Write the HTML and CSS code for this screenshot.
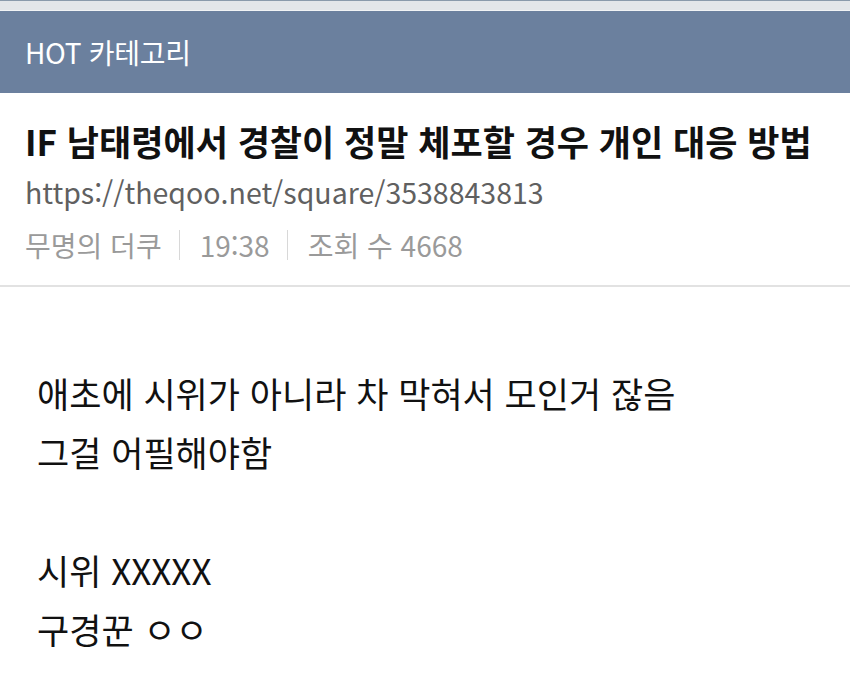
FILE: index.html
```html
<!DOCTYPE html>
<html lang="ko">
<head>
<meta charset="utf-8">
<link rel="stylesheet" href="styles.css">
</head>
<body>
<div class="topstrip"></div>
<div class="header"><span class="header-title">HOT 카테고리</span></div>
<div class="post-head">
  <h1 class="title">IF 남태령에서 경찰이 정말 체포할 경우 개인 대응 방법</h1>
  <div class="url">https://theqoo.net/square/3538843813</div>
  <div class="meta">
    <span>무명의 더쿠</span><span class="sep"></span><span>19:38</span><span class="sep"></span><span>조회 수 4668</span>
  </div>
</div>
<div class="content">
  <p class="line">애초에 시위가 아니라 차 막혀서 모인거 잖음</p>
  <p class="line">그걸 어필해야함</p>
  <p class="line blank">&nbsp;</p>
  <p class="line">시위 XXXXX</p>
  <p class="line">구경꾼 ㅇㅇ</p>
</div>
</body>
</html>
```
FILE: styles.css
```css
html, body {
  margin: 0;
  padding: 0;
  background: #ffffff;
  font-family: "Noto Sans CJK KR", "Noto Sans", sans-serif;
}
.topstrip {
  height: 9px;
  background: #e3e6e9;
  border-top: 1px solid #8a9aab;
  border-bottom: 1px solid #f1f3f5;
}
.header {
  height: 82px;
  background: #6b809e;
  display: flex;
  align-items: center;
  padding-left: 25px;
}
.header-title {
  color: #ffffff;
  font-size: 28px;
  letter-spacing: -0.3px;
  font-weight: 400;
}
.post-head {
  padding: 22px 25px 15px;
  border-bottom: 2px solid #e2e2e2;
}
.title {
  margin: 0;
  font-size: 35px;
  line-height: 52px;
  font-weight: 700;
  color: #111111;
  letter-spacing: 0;
  white-space: nowrap;
}
.url {
  font-size: 28.5px;
  line-height: 50px;
  color: #606060;
  white-space: nowrap;
}
.meta {
  margin-top: 3px;
  font-size: 28px;
  line-height: 50px;
  color: #9a9a9a;
  display: flex;
  align-items: center;
}
.sep {
  width: 1px;
  height: 30px;
  background: #d8d8d8;
  margin: 0 20px 0 17px;
}
.content {
  padding: 76px 37px 0;
}
.line {
  margin: 0;
  font-size: 35px;
  line-height: 59px;
  color: #111111;
  white-space: nowrap;
}
```
